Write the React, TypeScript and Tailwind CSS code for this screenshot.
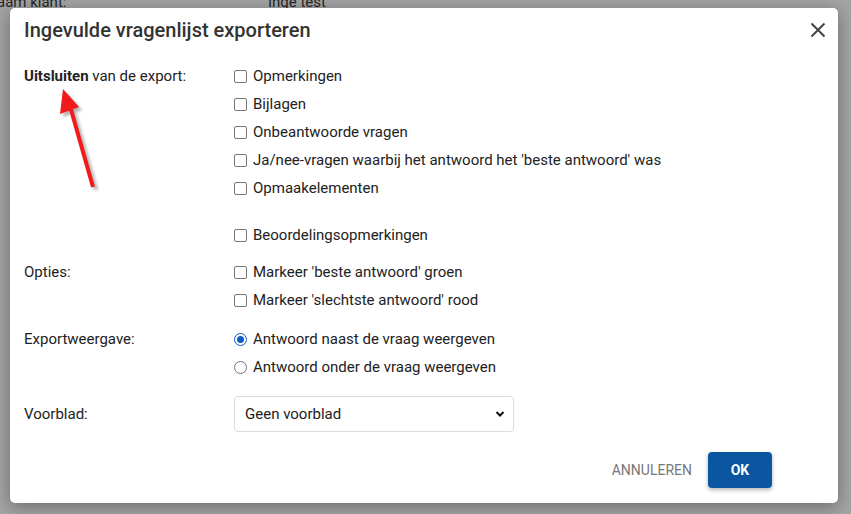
import React from "react"

function Box(){
    return <span className="inline-block w-[13px] h-[13px] border border-[#767676] rounded-[2px] bg-white shrink-0"></span>
}

function Radio({checked}:{checked?:boolean}){
    if(checked){
        return (
            <span className="inline-flex w-[13px] h-[13px] rounded-full border-[1.5px] border-[#0b5cc7] items-center justify-center shrink-0">
                <span className="w-[7px] h-[7px] rounded-full bg-[#0b5cc7]"></span>
            </span>
        )
    }
    return <span className="inline-block w-[13px] h-[13px] rounded-full border border-[#767676] shrink-0"></span>
}

function Option({label, radio, checked}:{label:string, radio?:boolean, checked?:boolean}){
    return (
        <div className="h-[28px] flex items-center gap-[6px]">
            {radio ? <Radio checked={checked}/> : <Box/>}
            <span>{label}</span>
        </div>
    )
}

function Row({label, children}:{label:React.ReactNode, children:React.ReactNode}){
    return (
        <div className="flex">
            <div className="w-[210px] h-[28px] flex items-center">{label}</div>
            <div className="flex flex-col">{children}</div>
        </div>
    )
}

export default function App(){
    return (
        <div className="relative w-[851px] h-[514px] overflow-hidden bg-[#a4a4a4] pt-[8px] pl-[10px] text-[15px] text-[#222]" style={{fontFamily: "Roboto, 'Noto Sans', sans-serif"}}>
            {/* page behind the overlay */}
            <div className="absolute top-[-9px] left-[-3px] text-[15px] text-[#262626]">aam klant:</div>
            <div className="absolute top-[-9px] left-[268px] text-[15px] text-[#262626]">Inge test</div>

            <div className="relative w-[828px] h-[495px] bg-white rounded-[5px] shadow-[0_4px_18px_rgba(0,0,0,0.35)] flex flex-col">
                <div className="h-[44px] flex items-center justify-between pl-[14px] pr-[10px]">
                    <h2 className="text-[20px] font-medium text-[#333]">Ingevulde vragenlijst exporteren</h2>
                    <svg width="20" height="20" viewBox="0 0 20 20" className="text-[#444]">
                        <path d="M3.5 3.5 L16.5 16.5 M16.5 3.5 L3.5 16.5" stroke="currentColor" strokeWidth="2"/>
                    </svg>
                </div>

                <div className="pl-[14px] pt-[10px] flex flex-col">
                    <Row label={<span><b className="font-bold">Uitsluiten</b> van de export:</span>}>
                        <Option label="Opmerkingen"/>
                        <Option label="Bijlagen"/>
                        <Option label="Onbeantwoorde vragen"/>
                        <Option label="Ja/nee-vragen waarbij het antwoord het 'beste antwoord' was"/>
                        <Option label="Opmaakelementen"/>
                        <div className="h-[19px]"></div>
                        <Option label="Beoordelingsopmerkingen"/>
                    </Row>
                    <div className="mt-[9px]">
                        <Row label="Opties:">
                            <Option label="Markeer 'beste antwoord' groen"/>
                            <Option label="Markeer 'slechtste antwoord' rood"/>
                        </Row>
                    </div>
                    <div className="mt-[11px]">
                        <Row label="Exportweergave:">
                            <Option label="Antwoord naast de vraag weergeven" radio checked/>
                            <Option label="Antwoord onder de vraag weergeven" radio/>
                        </Row>
                    </div>
                    <div className="mt-[15px] flex items-center">
                        <div className="w-[210px]">Voorblad:</div>
                        <div className="w-[280px] h-[36px] border border-[#dcdcdc] rounded-[4px] flex items-center justify-between pl-[10px] pr-[8px]">
                            <span>Geen voorblad</span>
                            <svg width="10" height="8" viewBox="0 0 10 8">
                                <path d="M1.5 2 L5 5.5 L8.5 2" fill="none" stroke="#111" strokeWidth="2"/>
                            </svg>
                        </div>
                    </div>
                </div>

                <div className="mt-auto mb-[15px] flex items-center justify-end pr-[66px] gap-[8px]">
                    <button className="h-[36px] px-[8px] text-[14px] text-[#777] uppercase">Annuleren</button>
                    <button className="h-[36px] w-[64px] rounded-[4px] bg-[#0a56a0] text-white font-bold text-[14px] shadow-[0_2px_4px_rgba(0,0,0,0.3)]">OK</button>
                </div>
            </div>

            {/* annotation arrow */}
            <svg className="absolute left-0 top-0 pointer-events-none" width="851" height="514">
                <defs>
                    <filter id="blur" x="-50%" y="-50%" width="200%" height="200%">
                        <feGaussianBlur stdDeviation="1.5"/>
                    </filter>
                </defs>
                <g transform="translate(3,3)" filter="url(#blur)" opacity="0.45">
                    <line x1="93" y1="187" x2="70" y2="106" stroke="#555" strokeWidth="4"/>
                    <polygon points="63,89 79,107 60,114" fill="#555"/>
                </g>
                <line x1="93" y1="187" x2="70" y2="106" stroke="#f01a1a" strokeWidth="4"/>
                <polygon points="63,89 79,107 60,114" fill="#f01a1a"/>
            </svg>
        </div>
    )
}
